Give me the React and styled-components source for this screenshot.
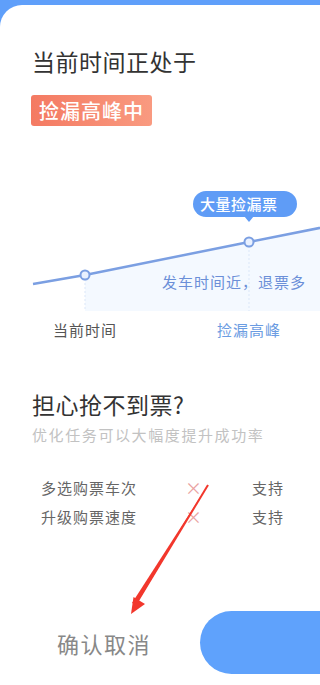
import React from "react";
import styled, { createGlobalStyle } from "styled-components";

const GlobalStyle = createGlobalStyle`
  html, body {
    margin: 0;
    padding: 0;
    background: #ffffff;
    overflow: hidden;
  }
  body {
    font-family: "Noto Sans CJK SC", "Noto Sans", sans-serif;
  }
`;

const Page = styled.div`
  width: 100%;
  height: 685px;
  overflow: hidden;
  background: #5f9ffa;
  padding-top: 5px;
  box-sizing: border-box;
  position: relative;
`;

const Card = styled.div`
  width: 420px;
  height: 680px;
  background: #ffffff;
  border-top-left-radius: 22px;
  display: flex;
  flex-direction: column;
`;

const Title = styled.h2`
  margin: ${(p) => p.$top}px 0 0;
  padding-left: 32px;
  font-size: 23px;
  line-height: 32px;
  font-weight: 400;
  color: #333333;
  letter-spacing: 0.5px;
  white-space: nowrap;
`;

const Badge = styled.div`
  align-self: flex-start;
  margin: 18px 0 0 31px;
  height: 31px;
  padding: 0 8px;
  border-radius: 3px;
  background: linear-gradient(90deg, #f47a62, #f99a80);
  color: #ffffff;
  font-size: 20px;
  line-height: 31px;
  font-weight: 500;
  letter-spacing: 1px;
`;

const Chart = styled.svg`
  display: block;
  margin-top: 58px;
  width: 420px;
  height: 135px;
`;

const Labels = styled.div`
  display: flex;
  gap: 100px;
  padding-left: 53px;
  height: 22px;
  font-size: 15px;
  line-height: 22px;
  letter-spacing: 1px;
  white-space: nowrap;
`;

const Label = styled.span`
  color: ${(p) => (p.$active ? "#6b9ce2" : "#555555")};
`;

const Sub = styled.p`
  margin: 4px 0 0;
  padding-left: 32px;
  font-size: 15px;
  line-height: 22px;
  letter-spacing: 1.6px;
  color: #c2c2c2;
  white-space: nowrap;
`;

const Table = styled.div`
  margin-top: 27px;
  padding-left: 41px;
  display: grid;
  grid-template-columns: 144px 67px auto;
  grid-auto-rows: 29px;
  align-items: center;
  font-size: 15px;
  letter-spacing: 1px;
  white-space: nowrap;
`;

const Cell = styled.span`
  color: #666666;
`;

const Cross = styled.span`
  color: #eaa2a2;
  font-size: 17px;
  line-height: 1;
`;

const Footer = styled.div`
  margin-top: 80px;
  padding-left: 57px;
  display: flex;
  align-items: center;
  gap: 49px;
`;

const Cancel = styled.span`
  font-size: 22px;
  letter-spacing: 1.5px;
  color: #888888;
  white-space: nowrap;
`;

const Confirm = styled.button`
  width: 260px;
  height: 63px;
  border: none;
  border-radius: 32px;
  background: #5fa2fc;
  flex-shrink: 0;
`;

const Arrow = styled.svg`
  position: absolute;
  left: 0;
  top: 0;
  width: 258px;
  height: 685px;
  pointer-events: none;
`;

const rows = [
  ["多选购票车次", "支持"],
  ["升级购票速度", "支持"],
];

export default function App() {
  return (
    <>
      <GlobalStyle />
      <Page>
        <Card>
          <Title $top={40}>当前时间正处于</Title>
          <Badge>捡漏高峰中</Badge>

          <Chart viewBox="0 185 420 135">
            <polygon
              points="85,276 249,243 420,209 420,312 85,312"
              fill="#f4f9ff"
            />
            <line x1="85" y1="280" x2="85" y2="312" stroke="#dbe7f8" strokeDasharray="2 2" />
            <line x1="249" y1="247" x2="249" y2="312" stroke="#dbe7f8" strokeDasharray="2 2" />
            <polyline
              points="33,285 85,276 249,243 420,209"
              fill="none"
              stroke="#7b9fe2"
              strokeWidth="2.5"
              strokeLinejoin="round"
            />
            <circle cx="85" cy="276" r="4.5" fill="#e9f1ff" stroke="#7b9fe2" strokeWidth="2" />
            <circle cx="249" cy="243" r="4.5" fill="#e9f1ff" stroke="#7b9fe2" strokeWidth="2" />
            <text x="162" y="289" fontSize="15" fill="#6b8fd8" letterSpacing="1">
              发车时间近，退票多
            </text>
            <rect x="193" y="192" width="104" height="26" rx="13" fill="#5f9cf6" />
            <polygon points="244,217 254,217 249,223" fill="#5f9cf6" />
            <text x="200" y="210.5" fontSize="15" fill="#ffffff" fontWeight="500" letterSpacing="0.5">
              大量捡漏票
            </text>
          </Chart>

          <Labels>
            <Label>当前时间</Label>
            <Label $active>捡漏高峰</Label>
          </Labels>

          <Title $top={47}>担心抢不到票?</Title>
          <Sub>优化任务可以大幅度提升成功率</Sub>

          <Table>
            {rows.map(([a, b]) => (
              <React.Fragment key={a}>
                <Cell>{a}</Cell>
                <Cross>×</Cross>
                <Cell>{b}</Cell>
              </React.Fragment>
            ))}
          </Table>

          <Footer>
            <Cancel>确认取消</Cancel>
            <Confirm />
          </Footer>
        </Card>

        <Arrow viewBox="0 0 258 685">
          <path d="M208,485 L136,605 L132,603 Z" fill="#f2372c" />
          <line x1="208" y1="485" x2="136" y2="604" stroke="#f2372c" strokeWidth="2" />
          <polygon points="131,614 133.5,597 145,604" fill="#f2372c" />
        </Arrow>
      </Page>
    </>
  );
}
